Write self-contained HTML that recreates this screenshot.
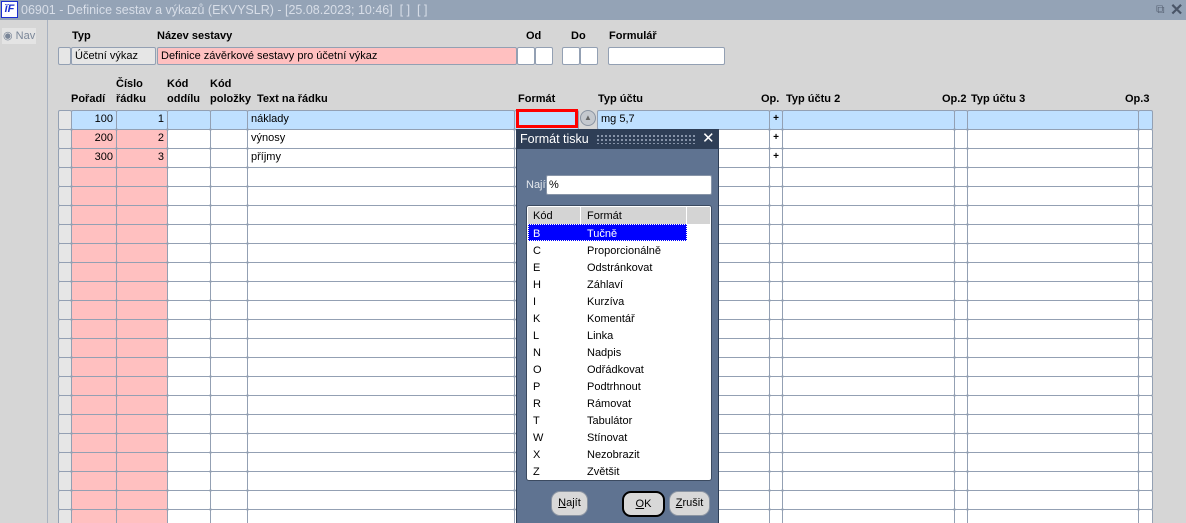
<!DOCTYPE html>
<html><head><meta charset="utf-8">
<style>
*{box-sizing:border-box;margin:0;padding:0}
html{width:1186px;height:523px;overflow:hidden}
body{width:1186px;height:523px;overflow:hidden;background:#d6d6d6;font-family:"Liberation Sans",Arial,sans-serif;font-size:11px;color:#000;position:relative}
.a{position:absolute}
.title{left:0;top:0;width:1186px;height:20px;background:#94a3b6;color:#d8dee8;font-size:12.5px;line-height:20px;padding-left:21px;white-space:nowrap}
.lbl{position:absolute;font-weight:bold;font-size:11px;line-height:14px}
.c{position:absolute;height:18px;border:1px solid #93a0b3;border-radius:2px;background:#fff;line-height:16px;padding:0 3px;white-space:nowrap;overflow:hidden}
.r{text-align:right}
.pk{background:#ffc0c0}
.bl{background:#bfe0ff}
.gr{background:#e6e6e6}
.pl{text-align:center;font-weight:bold;font-size:10px}
</style></head><body>
<div class="a title">06901 - Definice sestav a výkazů (EKVYSLR) - [25.08.2023; 10:46]&nbsp; [ ]&nbsp; [ ]</div>
<div class="a" style="left:1px;top:1px;width:17px;height:17px;background:#fff;border:1px solid #1a2fd0;color:#1a2fd0;font-weight:bold;font-style:italic;font-size:11px;line-height:15px;text-align:center">ĭF</div>
<div class="a" style="left:1156px;top:2px;color:#5a6577;font-size:12px">&#x29C9;</div>
<div class="a" style="left:1170px;top:0px;color:#4a5567;font-size:16px;font-weight:bold">✕</div>
<div class="a" style="left:0;top:20px;width:48px;height:503px;background:#d6d6d6;border-right:1px solid #a9b2c0"></div>
<div class="a" style="left:2px;top:28px;width:34px;height:16px;background:#e4e4e4;color:#7a8698;font-size:11px;line-height:16px;padding-left:1px;white-space:nowrap">◉ Nav</div>
<div class="lbl" style="left:72px;top:29px">Typ</div>
<div class="lbl" style="left:157px;top:29px">Název sestavy</div>
<div class="lbl" style="left:526px;top:29px">Od</div>
<div class="lbl" style="left:571px;top:29px">Do</div>
<div class="lbl" style="left:609px;top:29px">Formulář</div>
<div class="c gr" style="left:58px;top:47px;width:13px"></div>
<div class="c gr" style="left:71px;top:47px;width:85px">Účetní výkaz</div>
<div class="c pk" style="left:157px;top:47px;width:360px">Definice závěrkové sestavy pro účetní výkaz</div>
<div class="c" style="left:517px;top:47px;width:18px"></div>
<div class="c" style="left:535px;top:47px;width:18px"></div>
<div class="c" style="left:562px;top:47px;width:18px"></div>
<div class="c" style="left:580px;top:47px;width:18px"></div>
<div class="c" style="left:608px;top:47px;width:117px"></div>
<div class="lbl" style="left:116px;top:77px">Číslo</div>
<div class="lbl" style="left:167px;top:77px">Kód</div>
<div class="lbl" style="left:210px;top:77px">Kód</div>
<div class="lbl" style="left:71px;top:92px">Pořadí</div>
<div class="lbl" style="left:116px;top:92px">řádku</div>
<div class="lbl" style="left:167px;top:92px">oddílu</div>
<div class="lbl" style="left:210px;top:92px">položky</div>
<div class="lbl" style="left:257px;top:92px">Text na řádku</div>
<div class="lbl" style="left:518px;top:92px">Formát</div>
<div class="lbl" style="left:598px;top:92px">Typ účtu</div>
<div class="lbl" style="left:761px;top:92px">Op.</div>
<div class="lbl" style="left:786px;top:92px">Typ účtu 2</div>
<div class="lbl" style="left:942px;top:92px">Op.2</div>
<div class="lbl" style="left:971px;top:92px">Typ účtu 3</div>
<div class="lbl" style="left:1125px;top:92px">Op.3</div>
<div id="g"></div>
<div class="a" style="left:516px;top:109px;width:62px;height:19px;border:3px solid #f00;background:#bfe0ff"></div>
<div class="a" style="left:580px;top:110px;width:16px;height:16px;border-radius:50%;background:#c4c8ce;border:1px solid #8a94a2;color:#666;font-size:8px;text-align:center;line-height:13px">▲</div>
<div class="a" style="left:516px;top:129px;width:203px;height:394px;background:#5f7391;border:1px solid #2e3e56;border-bottom:none"></div>
<div class="a" style="left:516px;top:129px;width:203px;height:20px;background:#2e3e56;color:#fff;font-size:12.5px;line-height:20px;padding-left:4px">Formát tisku</div>
<div class="a" style="left:596px;top:134px;width:100px;height:10px;background-image:radial-gradient(#8e9bb0 1px,transparent 1.2px);background-size:4px 4px"></div>
<div class="a" style="left:702px;top:129px;color:#fff;font-size:15px;line-height:20px">✕</div>
<div class="a" style="left:526px;top:179px;color:#e4e8ee;font-size:11px">Najít</div>
<div class="a" style="left:546px;top:175px;width:166px;height:20px;background:#fff;border:1px solid #8895a8;border-radius:2px;padding-left:2px;line-height:18px;font-size:11px">%</div>
<div class="a" style="left:526px;top:205px;width:186px;height:276px;background:#fff;border:1px solid #3b4a60;border-radius:3px"></div>
<div class="a" style="left:528px;top:207px;width:182px;height:17px;background:#d4d4d4"></div>
<div class="a" style="left:533px;top:210px">Kód</div>
<div class="a" style="left:580px;top:207px;width:1px;height:17px;background:#fff"></div>
<div class="a" style="left:587px;top:210px">Formát</div>
<div class="a" style="left:686px;top:207px;width:1px;height:17px;background:#fff"></div>
<div class="a" style="left:528px;top:224px;width:159px;height:17px;background:#0000ff;border:1px dotted #fff"></div>
<div id="lst"></div>
<div class="a" style="left:551px;top:491px;width:37px;height:25px;border-radius:9px;background:#d8d8d8;border:1px solid #8a94a2;text-align:center;line-height:23px"><u>N</u>ajít</div>
<div class="a" style="left:622px;top:491px;width:43px;height:26px;border-radius:9px;background:#d8d8d8;border:2px solid #000;text-align:center;line-height:22px"><u>O</u>K</div>
<div class="a" style="left:669px;top:491px;width:41px;height:25px;border-radius:9px;background:#d8d8d8;border:1px solid #8a94a2;text-align:center;line-height:23px"><u>Z</u>rušit</div>
<script>
var g='';
var cols=[[58,13,'gr'],[71,45,'pk r'],[116,51,'pk r'],[167,43,''],[210,37,''],[247,267,''],[514,64,''],[580,16,'x'],[597,172,''],[769,13,'pl'],[782,172,''],[954,13,''],[967,171,''],[1138,14,'']];
var d=[['100','1','náklady','mg 5,7'],['200','2','výnosy',''],['300','3','příjmy','']];
for(var i=0;i<22;i++){var y=110+i*19;
for(var j=0;j<cols.length;j++){var c=cols[j],cl=c[2],t='';
if(cl=='x'){if(i==0)continue;cl='';}
if(i==0&&j>0)cl=cl.replace('pk','')+' bl';
if(i<3){if(j==1)t=d[i][0];if(j==2)t=d[i][1];if(j==5)t=d[i][2];if(j==8)t=d[i][3];if(j==9)t='+';}
g+='<div class="c '+cl+'" style="left:'+c[0]+'px;top:'+y+'px;width:'+(c[1]+1)+'px;height:20px">'+t+'</div>';}}
document.getElementById('g').innerHTML=g;
var L=[['B','Tučně'],['C','Proporcionálně'],['E','Odstránkovat'],['H','Záhlaví'],['I','Kurzíva'],['K','Komentář'],['L','Linka'],['N','Nadpis'],['O','Odřádkovat'],['P','Podtrhnout'],['R','Rámovat'],['T','Tabulátor'],['W','Stínovat'],['X','Nezobrazit'],['Z','Zvětšit']];
var s='';for(var k=0;k<L.length;k++){var y=228+k*17,col=k==0?'#fff':'#000';
s+='<div class="a" style="left:533px;top:'+y+'px;color:'+col+'">'+L[k][0]+'</div><div class="a" style="left:587px;top:'+y+'px;color:'+col+'">'+L[k][1]+'</div>';}
document.getElementById('lst').innerHTML=s;
</script>
</body></html>
